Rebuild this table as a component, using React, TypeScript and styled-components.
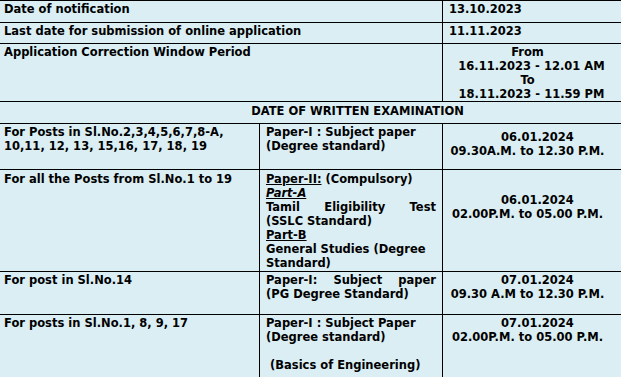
import React from 'react';
import styled, { createGlobalStyle } from 'styled-components';

const Global = createGlobalStyle`
  html, body {
    margin: 0;
    padding: 0;
    background: #daeef3;
    overflow: hidden;
  }
  body {
    font-family: "DejaVu Sans", Verdana, sans-serif;
  }
`;

const Sheet = styled.div`
  width: 624px;
  margin-left: -2px;
  background: #daeef3;
  color: #000;
  font-family: "DejaVu Sans", Verdana, sans-serif;
  font-weight: bold;
  font-size: 11.5px;
  line-height: 14px;
`;

const Row = styled.div<{ $h: number; $cols: string }>`
  display: grid;
  grid-template-columns: ${(p) => p.$cols};
  height: ${(p) => p.$h}px;
  border-top: 1px solid #000;
  box-sizing: border-box;
`;

const Cell = styled.div<{
  $align?: 'left' | 'center';
  $top?: number;
  $left?: number;
  $right?: number;
}>`
  border-left: 1px solid #000;
  padding: ${(p) => p.$top ?? 1}px ${(p) => p.$right ?? 6}px 0
    ${(p) => p.$left ?? 6}px;
  text-align: ${(p) => p.$align ?? 'left'};
  min-width: 0;
  overflow: hidden;
`;

const Line = styled.span<{ $shift?: number }>`
  display: block;
  white-space: nowrap;
  padding-left: ${(p) => p.$shift ?? 0}px;
`;

const Para = styled.span`
  display: block;
`;

const Justified = styled.span`
  display: block;
  text-align: justify;
  text-align-last: justify;
  white-space: nowrap;
`;

const Blank = styled.span`
  display: block;
  height: 14px;
`;

const Under = styled.span<{ $italic?: boolean }>`
  text-decoration-line: underline;
  text-decoration-color: #000;
  text-decoration-thickness: 1px;
  text-underline-offset: 1px;
  font-style: ${(p) => (p.$italic ? 'italic' : 'normal')};
`;

const TOP = '444px 1fr';
const LOW = '261px 183px 1fr';

type Slot = { date: string; time: string; top: number };

const DateTime: React.FC<Slot> = ({ date, time, top }) => (
  <Cell $align="center" $right={16} $top={top}>
    <Line $shift={20}>{date}</Line>
    <Line>{time}</Line>
  </Cell>
);

export default function App() {
  return (
    <>
      <Global />
      <Sheet>
        <Row $h={22} $cols={TOP}>
          <Cell $left={5}>Date of notification</Cell>
          <Cell>13.10.2023</Cell>
        </Row>
        <Row $h={21} $cols={TOP}>
          <Cell $left={5}>Last date for submission of online application</Cell>
          <Cell>11.11.2023</Cell>
        </Row>
        <Row $h={58} $cols={TOP}>
          <Cell $left={5}>Application Correction Window Period</Cell>
          <Cell $align="center" $right={16}>
            <Line>From</Line>
            <Line $shift={8}>16.11.2023 - 12.01 AM</Line>
            <Line>To</Line>
            <Line $shift={8}>18.11.2023 - 11.59 PM</Line>
          </Cell>
        </Row>
        <Row $h={22} $cols="1fr">
          <Cell $align="center" $left={100} $top={2}>
            DATE OF WRITTEN EXAMINATION
          </Cell>
        </Row>
        <Row $h={46} $cols={LOW}>
          <Cell $left={5}>
            <Para>For Posts in Sl.No.2,3,4,5,6,7,8-A,</Para>
            <Para>10,11, 12, 13, 15,16, 17, 18, 19</Para>
          </Cell>
          <Cell>
            <Para>Paper-I : Subject paper</Para>
            <Para>(Degree standard)</Para>
          </Cell>
          <DateTime date="06.01.2024" time="09.30A.M. to 12.30 P.M." top={6} />
        </Row>
        <Row $h={102} $cols={LOW}>
          <Cell $left={5} $top={2}>
            For all the Posts from Sl.No.1 to 19
          </Cell>
          <Cell $top={2}>
            <Para>
              <Under>Paper-II:</Under> (Compulsory)
            </Para>
            <Para>
              <Under $italic>Part-A</Under>
            </Para>
            <Justified>Tamil Eligibility Test</Justified>
            <Para>(SSLC Standard)</Para>
            <Para>
              <Under>Part-B</Under>
            </Para>
            <Para>General Studies (Degree Standard)</Para>
          </Cell>
          <DateTime date="06.01.2024" time="02.00P.M. to 05.00 P.M." top={23} />
        </Row>
        <Row $h={43} $cols={LOW}>
          <Cell $left={5}>For post in Sl.No.14</Cell>
          <Cell>
            <Justified>Paper-I: Subject paper</Justified>
            <Para>(PG Degree Standard)</Para>
          </Cell>
          <DateTime date="07.01.2024" time="09.30 A.M to 12.30 P.M." top={1} />
        </Row>
        <Row $h={80} $cols={LOW}>
          <Cell $left={5}>For posts in Sl.No.1, 8, 9, 17</Cell>
          <Cell>
            <Para>Paper-I : Subject Paper</Para>
            <Para>(Degree standard)</Para>
            <Blank />
            <Line $shift={4}>(Basics of Engineering)</Line>
          </Cell>
          <DateTime date="07.01.2024" time="02.00P.M. to 05.00 P.M." top={1} />
        </Row>
      </Sheet>
    </>
  );
}
